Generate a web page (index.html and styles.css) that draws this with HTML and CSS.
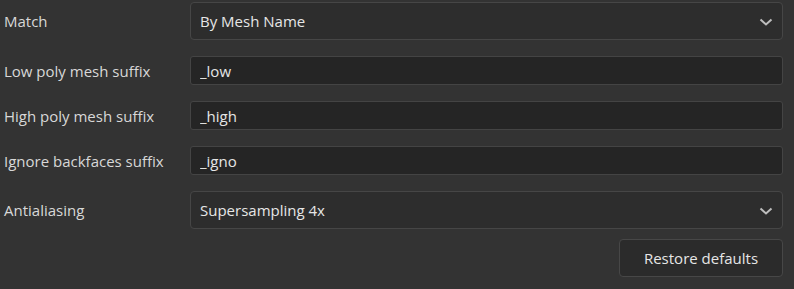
FILE: index.html
```html
<!DOCTYPE html>
<html lang="en">
<head>
  <meta charset="UTF-8" />
  <title>Bake settings</title>
  <link rel="stylesheet" href="styles.css">
</head>
<body>
  <div class="form">
    <label class="label">Match</label>
    <div class="select">
      <span>By Mesh Name</span>
      <svg class="chevron" width="14" height="8" viewBox="0 0 14 8"><path d="M1.5 1.5 L7 6.5 L12.5 1.5" fill="none" stroke="#bdbdbd" stroke-width="2"/></svg>
    </div>

    <label class="label">Low poly mesh suffix</label>
    <input class="field" type="text" value="_low" />

    <label class="label">High poly mesh suffix</label>
    <input class="field" type="text" value="_high" />

    <label class="label">Ignore backfaces suffix</label>
    <input class="field" type="text" value="_igno" />

    <label class="label">Antialiasing</label>
    <div class="select">
      <span>Supersampling 4x</span>
      <svg class="chevron" width="14" height="8" viewBox="0 0 14 8"><path d="M1.5 1.5 L7 6.5 L12.5 1.5" fill="none" stroke="#bdbdbd" stroke-width="2"/></svg>
    </div>
  </div>

  <div class="actions">
    <button class="btn">Restore defaults</button>
  </div>
</body>
</html>
```

FILE: styles.css
```css
body {
  margin: 0;
  padding: 2px 11px 0 4px;
  background: #333333;
  font-family: "Open Sans", "Noto Sans", sans-serif;
  font-size: 15px;
  color: #dcdcdc;
}
.form {
  display: grid;
  grid-template-columns: 186px 1fr;
  row-gap: 16px;
  align-items: center;
}
.label {
  color: #d8d8d8;
}
.select {
  height: 38px;
  box-sizing: border-box;
  display: flex;
  align-items: center;
  justify-content: space-between;
  padding: 0 9px 0 9px;
  background: #2d2d2d;
  border: 1px solid #464646;
  border-radius: 4px;
  color: #e6e6e6;
}
.chevron {
  margin-top: 1px;
}
.field {
  height: 29px;
  box-sizing: border-box;
  padding: 0 9px;
  background: #252525;
  border: 1px solid #444444;
  border-radius: 3px;
  color: #e6e6e6;
  font: inherit;
  outline: none;
}
.actions {
  display: flex;
  justify-content: flex-end;
  margin-top: 10px;
}
.btn {
  width: 164px;
  height: 38px;
  background: #2b2b2b;
  border: 1px solid #474747;
  border-radius: 4px;
  color: #e6e6e6;
  font: inherit;
}
```
